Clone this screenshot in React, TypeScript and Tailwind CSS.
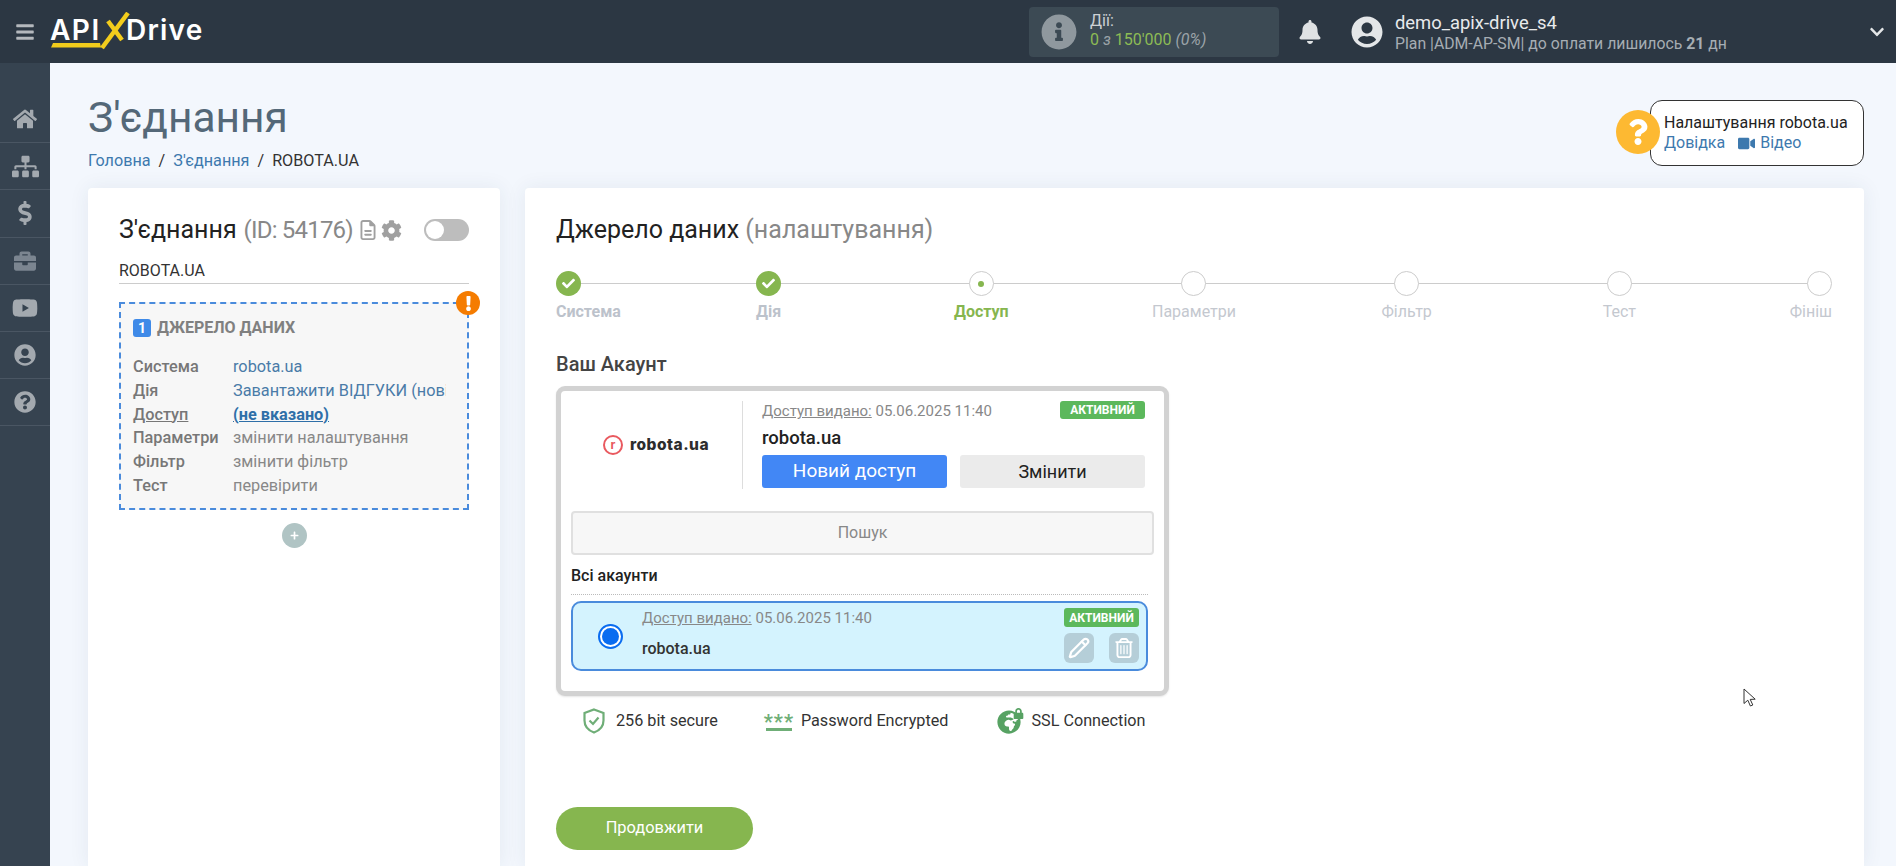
import {
  FaBars,
  FaBell,
  FaBriefcase,
  FaCheck,
  FaChevronDown,
  FaCog,
  FaDollarSign,
  FaExclamation,
  FaHome,
  FaInfoCircle,
  FaPlus,
  FaQuestion,
  FaQuestionCircle,
  FaSitemap,
  FaUserCircle,
  FaVideo,
  FaYoutube,
  FaGlobeAfrica,
  FaLock,
} from "react-icons/fa";
import { FaRegFileLines, FaRegTrashCan } from "react-icons/fa6";
import { Pencil } from "lucide-react";

const sideIcons = [
  { icon: FaHome, cls: "text-[24px] text-[#a3a9af]" },
  { icon: FaSitemap, cls: "text-[27px] text-[#a3a9af]" },
  { icon: FaDollarSign, cls: "text-[24px] text-[#a3a9af]" },
  { icon: FaBriefcase, cls: "text-[22px] text-[#7b8590]" },
  { icon: FaYoutube, cls: "text-[26px] text-[#a3a9af]" },
  { icon: FaUserCircle, cls: "text-[22px] text-[#a3a9af]" },
  { icon: FaQuestionCircle, cls: "text-[22px] text-[#a3a9af]" },
];

const steps = [
  { label: "Система", state: "done", align: "items-start" },
  { label: "Дія", state: "done", align: "items-center" },
  { label: "Доступ", state: "current", align: "items-center" },
  { label: "Параметри", state: "todo", align: "items-center" },
  { label: "Фільтр", state: "todo", align: "items-center" },
  { label: "Тест", state: "todo", align: "items-center" },
  { label: "Фініш", state: "todo", align: "items-end" },
];

const rows = [
  { k: "Система", v: "robota.ua", c: "text-[#4a7ba8]" },
  { k: "Дія", v: "Завантажити ВІДГУКИ (нові)", c: "text-[#4a7ba8]" },
  { k: "Доступ", v: "(не вказано)", c: "text-[#2f6fa8] font-bold underline", u: true },
  { k: "Параметри", v: "змінити налаштування", c: "text-[#888888]" },
  { k: "Фільтр", v: "змінити фільтр", c: "text-[#888888]" },
  { k: "Тест", v: "перевірити", c: "text-[#888888]" },
];

function Logo() {
  return (
    <div className="relative ml-[15px] h-[40px] w-[154px]" aria-label="ApiX-Drive">
      <span className="absolute left-0 top-[2px] font-['Inter',sans-serif] text-[28px] font-semibold leading-[32px] tracking-[1.5px] text-white">
        API
      </span>
      <svg className="absolute left-0 top-0" width="154" height="40" viewBox="0 0 154 40" fill="none">
        <path d="M1 35.5 L51 35.5 L50 31 L3 31 Z" fill="#f2cc1c" />
        <path d="M52 36 L78 1" stroke="#f2cc1c" strokeWidth="4.5" />
        <path d="M58 9 L72 28" stroke="#f2cc1c" strokeWidth="4.5" />
      </svg>
      <span className="absolute left-[76px] top-[2px] font-['Inter',sans-serif] text-[28px] font-semibold leading-[32px] tracking-[1.2px] text-white">
        Drive
      </span>
    </div>
  );
}

function Header() {
  return (
    <header className="flex h-[63px] shrink-0 items-center bg-[#2c3743]">
      <div className="flex flex-1 items-center">
        <FaBars className="ml-[15px] text-[20px] text-[#b4b8bd]" />
        <Logo />
      </div>
      <div className="flex h-[50px] w-[250px] items-center rounded-[4px] bg-[#3c4a54]">
        <FaInfoCircle className="ml-[12px] text-[36px] text-[#8f989e]" />
        <div className="mb-[3px] ml-[13px] text-[16px] leading-[19px]">
          <div className="text-[#ccd0d4]">Дії:</div>
          <div className="text-[#8dbb55]">
            0 <span className="italic text-[#9ba3a8]">з</span> 150'000{" "}
            <span className="italic text-[#9ba3a8]">(0%)</span>
          </div>
        </div>
      </div>
      <div className="flex w-[617px] items-center">
        <FaBell className="ml-[19px] text-[24px] text-[#dfe1e3]" />
        <FaUserCircle className="ml-[29px] text-[32px] text-[#e4e6e8]" />
        <div className="ml-[12px] pt-[2px]">
          <div className="text-[18.4px] leading-[22px] text-[#e8eaec]">demo_apix-drive_s4</div>
          <div className="text-[15.8px] leading-[19px] text-[#a6adb3]">
            Plan |ADM-AP-SM| до оплати лишилось <b className="font-bold">21</b> дн
          </div>
        </div>
        <FaChevronDown className="ml-auto mr-[11px] text-[16px] text-[#e4e6e8]" />
      </div>
    </header>
  );
}

function Sidebar() {
  return (
    <aside className="w-[50px] shrink-0 bg-[#364350] pt-[33px]">
      {sideIcons.map((item, i) => {
        const Icon = item.icon;
        return (
          <div key={i} className="flex h-[47.2px] items-center justify-center border-b border-[#4a5663]">
            <Icon className={item.cls} />
          </div>
        );
      })}
    </aside>
  );
}

function HelpBox() {
  return (
    <div className="relative mt-[37px] h-[66px] w-[214px] rounded-[12px] border border-[#333333] bg-white pl-[13px] pt-[12px] text-[16px] leading-[20px]">
      <div className="absolute -left-[35px] top-[9px] flex h-[44px] w-[44px] items-center justify-center rounded-full bg-[#fdb932]">
        <FaQuestion className="text-[26px] text-white" />
      </div>
      <div className="text-[#222222]">Налаштування robota.ua</div>
      <div className="flex items-center text-[#3d79ae]">
        Довідка
        <FaVideo className="ml-[13px] mr-[5px] text-[17px] text-[#3d79ae]" />
        Відео
      </div>
    </div>
  );
}

function ConnectionCard() {
  return (
    <section className="w-[412px] shrink-0 rounded-t-[4px] bg-white px-[31px] pt-[28px] shadow-[0_0_20px_rgba(40,60,90,0.08)]">
      <div className="flex h-[28px] items-center">
        <span className="text-[25px] leading-[28px] text-[#222222]">З'єднання</span>
        <span className="ml-[7px] text-[24px] leading-[28px] tracking-[-0.8px] text-[#888888]">(ID: 54176)</span>
        <FaRegFileLines className="ml-[5px] text-[20px] text-[#a0a0a0]" />
        <FaCog className="ml-[3px] text-[21px] text-[#a0a0a0]" />
        <div className="ml-auto flex h-[22px] w-[45px] items-center rounded-full bg-[#bdbdbd] pl-[2px]">
          <div className="h-[18px] w-[18px] rounded-full bg-white" />
        </div>
      </div>
      <div className="mt-[15px] h-[25px] border-b border-[#cccccc] text-[16px] leading-[24px] text-[#333333]">
        ROBOTA.UA
      </div>
      <div className="relative mt-[18px] h-[208px] border-2 border-dashed border-[#4a8bdc] bg-[#f7f7f7] pl-[12px] pt-[14px]">
        <div className="absolute -right-[13px] -top-[13px] flex h-[24px] w-[24px] items-center justify-center rounded-full bg-[#f57c00]">
          <FaExclamation className="text-[15px] text-white" />
        </div>
        <div className="flex h-[20px] items-center">
          <span className="flex h-[18px] w-[18px] items-center justify-center rounded-[3px] bg-[#3f8ae8] text-[14px] font-bold text-white">
            1
          </span>
          <span className="ml-[6px] text-[16px] font-bold text-[#808080]">ДЖЕРЕЛО ДАНИХ</span>
        </div>
        <div className="mt-[17px] text-[16.3px] leading-[23.8px]">
          {rows.map((r) => (
            <div key={r.k} className="flex">
              <div className={`w-[100px] shrink-0 font-medium text-[#777777] ${r.u ? "underline" : ""}`}>{r.k}</div>
              <div className={`w-[213px] overflow-hidden whitespace-nowrap ${r.c}`}>{r.v}</div>
            </div>
          ))}
        </div>
      </div>
      <div className="mt-[13px] flex justify-center">
        <div className="flex h-[25px] w-[25px] items-center justify-center rounded-full bg-[#b0c4c4]">
          <FaPlus className="text-[9px] text-white" />
        </div>
      </div>
    </section>
  );
}

function Stepper() {
  return (
    <div className="relative mt-[27px] grid grid-cols-[1fr_2fr_2fr_2fr_2fr_2fr_1fr]">
      <div className="absolute left-[12px] right-[12px] top-[12px] h-px bg-[#cccccc]" />
      {steps.map((s) => (
        <div key={s.label} className={`relative flex flex-col ${s.align}`}>
          {s.state === "done" && (
            <div className="flex h-[25px] w-[25px] items-center justify-center rounded-full bg-[#86b64f]">
              <FaCheck className="text-[13px] text-white" />
            </div>
          )}
          {s.state === "current" && (
            <div className="flex h-[25px] w-[25px] items-center justify-center rounded-full border border-[#cccccc] bg-white">
              <div className="h-[6px] w-[6px] rounded-full bg-[#86b64f]" />
            </div>
          )}
          {s.state === "todo" && <div className="h-[25px] w-[25px] rounded-full border border-[#cccccc] bg-white" />}
          <div
            className={`mt-[4px] whitespace-nowrap text-[16px] leading-[24px] ${
              s.state === "current"
                ? "font-bold text-[#86b64f]"
                : s.state === "done"
                  ? "font-bold text-[#bcc2cb]"
                  : "text-[#c4c8cf]"
            }`}
          >
            {s.label}
          </div>
        </div>
      ))}
    </div>
  );
}

function Active({ className }: { className: string }) {
  return (
    <div className={`flex items-center justify-center rounded-[3px] bg-[#5cb85c] text-[12px] font-bold text-white ${className}`}>
      АКТИВНИЙ
    </div>
  );
}

function AccountBox() {
  return (
    <div className="mt-[10px] h-[310px] w-[613px] rounded-[9px] border-[5px] border-[#d2d2d2] bg-white shadow-[0_1px_2px_rgba(0,0,0,0.1)]">
      <div className="flex pt-[10px]">
        <div className="flex h-[88px] w-[182px] items-center justify-center border-r border-[#dddddd]">
          <div className="ml-[9px] flex items-center">
            <div className="flex h-[20px] w-[20px] items-center justify-center rounded-full border-2 border-[#e9595f] font-['Inter',sans-serif] text-[12px] font-bold leading-none text-[#e9595f]">
              r
            </div>
            <span className="ml-[7px] font-['Inter',sans-serif] text-[15.5px] font-extrabold leading-none tracking-[0.5px] text-[#2d2d2d]">
              robota.ua
            </span>
          </div>
        </div>
        <div className="ml-[19px] w-[383px]">
          <div className="flex h-[20px] items-start justify-between">
            <div className="text-[15px] leading-[20px] text-[#888888]">
              <span className="underline">Доступ видано:</span> 05.06.2025 11:40
            </div>
            <Active className="h-[18px] w-[85px]" />
          </div>
          <div className="mt-[6px] text-[18.5px] font-medium leading-[22px] text-[#222222]">robota.ua</div>
          <div className="mt-[6px] flex justify-between">
            <div className="flex h-[33px] w-[185px] items-center justify-center rounded-[3px] bg-[#4287f5] text-[19px] text-white">
              Новий доступ
            </div>
            <div className="flex h-[33px] w-[185px] items-center justify-center rounded-[3px] bg-[#ebebeb] text-[18px] text-[#222222]">
              Змінити
            </div>
          </div>
        </div>
      </div>
      <div className="mx-[10px] mt-[22px] flex h-[44px] items-center justify-center rounded-[4px] border-2 border-[#e0e0e0] bg-[#f7f7f7] text-[16px] text-[#888888]">
        Пошук
      </div>
      <div className="ml-[10px] mt-[11px] h-[29px] w-[577px] border-b border-dotted border-[#bbbbbb] text-[16px] font-medium leading-[20px] text-[#222222]">
        Всі акаунти
      </div>
      <div className="mx-[10px] mt-[6px] flex h-[70px] w-[577px] rounded-[10px] border-2 border-[#4a8bdc] bg-[#d4f3fe]">
        <div className="ml-[25px] mt-[21px] flex h-[25px] w-[25px] items-center justify-center rounded-full border-2 border-[#0a6cf0] bg-white">
          <div className="h-[17px] w-[17px] rounded-full bg-[#0a6cf0]" />
        </div>
        <div className="ml-[19px] pt-[5px]">
          <div className="text-[15px] leading-[20px] text-[#888888]">
            <span className="underline">Доступ видано:</span> 05.06.2025 11:40
          </div>
          <div className="mt-[11px] text-[16px] font-medium leading-[20px] text-[#333333]">robota.ua</div>
        </div>
        <div className="ml-auto mr-[7px] flex w-[75px] flex-col pt-[5px]">
          <Active className="h-[19px] w-[75px]" />
          <div className="mt-[6px] flex justify-between">
            <div className="flex h-[30px] w-[30px] items-center justify-center rounded-[6px] bg-[#b5ced8]">
              <Pencil size={22} strokeWidth={2.4} className="text-white" />
            </div>
            <div className="flex h-[30px] w-[30px] items-center justify-center rounded-[6px] bg-[#b5ced8]">
              <FaRegTrashCan className="text-[20px] text-white" />
            </div>
          </div>
        </div>
      </div>
    </div>
  );
}

function Secure() {
  return (
    <div className="relative mt-[11px] flex h-[28px] items-center text-[16.2px] text-[#333333]">
      <svg className="ml-[27px]" width="22" height="26" viewBox="0 0 22 26" fill="none">
        <path d="M11 1.5 L20.5 5 V12.5 C20.5 18.5 16.5 22.5 11 24.5 C5.5 22.5 1.5 18.5 1.5 12.5 V5 Z" stroke="#6fae77" strokeWidth="2.2" />
        <path d="M6.5 12.5 L10 16 L15.5 9.5" stroke="#6fae77" strokeWidth="2.2" />
      </svg>
      <span className="ml-[11px]">256 bit secure</span>
      <div className="ml-[47px] flex w-[28px] flex-col items-center">
        <span className="h-[13px] text-[20px] font-bold leading-[20px] tracking-[1px] text-[#6fae77]">***</span>
        <div className="mt-[3px] h-[3px] w-[26px] bg-[#6fae77]" />
      </div>
      <span className="ml-[8px]">Password Encrypted</span>
      <div className="relative ml-[49px] h-[26px] w-[27px]">
        <FaGlobeAfrica className="absolute bottom-0 left-0 text-[24px] text-[#57a263]" />
        <FaLock className="absolute right-0 top-0 text-[11px] text-[#57a263]" />
      </div>
      <span className="ml-[7px]">SSL Connection</span>
    </div>
  );
}

function SourceCard() {
  return (
    <section className="flex-1 rounded-t-[4px] bg-white pl-[31px] pr-[32px] pt-[28px] shadow-[0_0_20px_rgba(40,60,90,0.08)]">
      <div className="text-[25px] leading-[28px] text-[#222222]">
        Джерело даних <span className="text-[#888888]">(налаштування)</span>
      </div>
      <Stepper />
      <div className="mt-[28px] text-[20px] font-medium leading-[24px] text-[#444444]">Ваш Акаунт</div>
      <AccountBox />
      <Secure />
      <div className="mt-[72px] flex h-[43px] w-[197px] items-center justify-center rounded-full bg-[#86b64f] text-[16.4px] text-white">
        Продовжити
      </div>
    </section>
  );
}

function Cursor() {
  return (
    <svg className="absolute left-[1743px] top-[688px]" width="14" height="20" viewBox="0 0 14 20" fill="none">
      <path d="M1 1 V15.5 L4.8 12.2 L7.4 18 L9.8 17 L7.2 11.4 L12.2 11.2 Z" fill="#ffffff" stroke="#333333" strokeWidth="1" />
    </svg>
  );
}

export default function App() {
  return (
    <div className="relative flex h-screen flex-col overflow-hidden bg-[#f3f7fd] font-['Roboto',sans-serif]">
      <Header />
      <div className="flex min-h-0 flex-1">
        <Sidebar />
        <main className="flex min-w-0 flex-1 flex-col pl-[38px] pr-[32px]">
          <div className="flex h-[125px] shrink-0 items-start justify-between">
            <div className="pt-[32px]">
              <h1 className="text-[42.5px] font-normal leading-[46px] text-[#546878]">З'єднання</h1>
              <div className="mt-[9px] flex text-[16.2px] leading-[22px]">
                <span className="text-[#3d79ae]">Головна</span>
                <span className="mx-[8px] text-[#333333]">/</span>
                <span className="text-[#3d79ae]">З'єднання</span>
                <span className="mx-[8px] text-[#333333]">/</span>
                <span className="text-[#333333]">ROBOTA.UA</span>
              </div>
            </div>
            <HelpBox />
          </div>
          <div className="flex min-h-0 flex-1 gap-[25px]">
            <ConnectionCard />
            <SourceCard />
          </div>
        </main>
      </div>
      <Cursor />
    </div>
  );
}
